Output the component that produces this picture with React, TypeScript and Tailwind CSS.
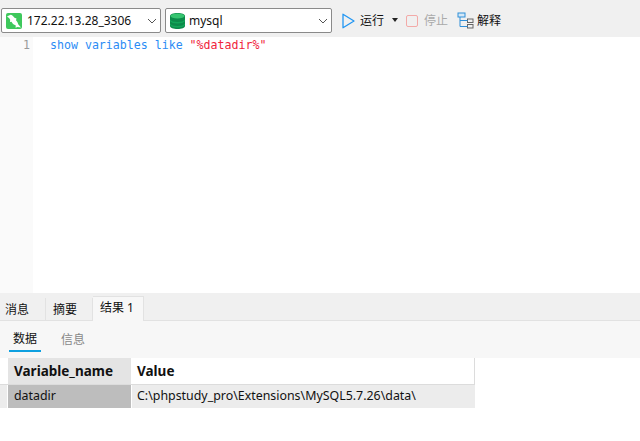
const uiFont = "font-['Noto_Sans','Noto_Sans_CJK_SC',sans-serif]"

function Chevron() {
  return (
    <svg width="10" height="6" viewBox="0 0 10 6" fill="none" stroke="#555" strokeWidth="1" aria-hidden="true">
      <path d="M1 1l4 4 4-4" />
    </svg>
  )
}

function DolphinIcon() {
  return (
    <svg width="16" height="16" viewBox="0 0 16 16" aria-hidden="true">
      <rect width="16" height="16" rx="2" fill="#3ec85c" />
      <path d="M1 3.500 3 2.500 4.500 1.800C6 2 7.500 3.200 8.500 4.800L10.500 5.500 10 7.200C11.200 8.500 12 10 12.200 11.300L15 14.500 11.500 14 9.500 14.800 9.800 12.500 7 11 5.500 8.800 4 9 4.200 6.800 3 5z" fill="#fff" />
    </svg>
  )
}

function DatabaseIcon() {
  return (
    <svg width="15" height="16" viewBox="0 0 15 16" aria-hidden="true">
      <path d="M0 3c0-1.700 3.400-3 7.500-3S15 1.300 15 3v10c0 1.700-3.400 3-7.500 3S0 14.700 0 13z" fill="#0c8a4a" />
      <ellipse cx="7.500" cy="3" rx="7" ry="2.600" fill="#35c46f" />
      <path d="M0 6.500c1 1.700 4 2.500 7.500 2.500s6.500-.8 7.500-2.500v1.500C14 9.700 11 10.500 7.500 10.500S1 9.700 0 8z" fill="#12a659" />
      <path d="M0 10.500c1 1.700 4 2.500 7.500 2.500s6.500-.8 7.500-2.500V12c-1 1.700-4 2.500-7.500 2.500S1 13.700 0 12z" fill="#12a659" />
    </svg>
  )
}

function ExplainIcon() {
  return (
    <svg width="17" height="17" viewBox="0 0 17 17" fill="none" aria-hidden="true">
      <rect x="1" y="1" width="7" height="4" fill="#d5e8f7" stroke="#2f8fd8" />
      <rect x="10.500" y="7" width="5.500" height="3.500" stroke="#666" />
      <rect x="10.500" y="12.500" width="5.500" height="3.500" stroke="#666" />
      <path d="M3 5v9.500h7.500M3 8.500h7.500" stroke="#2f8fd8" />
    </svg>
  )
}

export default function App() {
  return (
    <div className={`flex h-[441px] w-[640px] flex-col overflow-hidden bg-white text-[#111] ${uiFont}`}>
      {/* Toolbar */}
      <div className="flex h-[37px] items-start gap-[4px] bg-[#f0f0f0] pl-[1px] pt-[8px]">
        <div className="flex h-[25px] w-[160px] items-center rounded-[2px] border border-[#8a8a8a] bg-white pl-[4px] pr-[3px]">
          <DolphinIcon />
          <span className="ml-[5px] flex-1 text-[12px] leading-none">172.22.13.28_3306</span>
          <Chevron />
        </div>
        <div className="flex h-[25px] w-[167px] items-center rounded-[2px] border border-[#8a8a8a] bg-white pl-[4px] pr-[3px]">
          <DatabaseIcon />
          <span className="ml-[4px] flex-1 text-[12px] leading-none">mysql</span>
          <Chevron />
        </div>
        <div className="ml-[6px] flex h-[25px] items-center">
          <svg width="13" height="16" viewBox="0 0 13 16" fill="none" stroke="#2196f3" strokeWidth="1.300" aria-hidden="true">
            <path d="M1 1.200v13.600L12 8z" strokeLinejoin="round" />
          </svg>
          <span className="ml-[5px] text-[12px] leading-none">运行</span>
          <span className="ml-[8px] mt-[-1px] h-0 w-0 border-x-[3px] border-t-[4px] border-x-transparent border-t-[#222]" />
          <span className="ml-[8px] h-[12px] w-[12px] rounded-[2px] border border-[#f3aaa8]" />
          <span className="ml-[6px] text-[12px] leading-none text-[#aaa]">停止</span>
          <span className="ml-[9px]"><ExplainIcon /></span>
          <span className="ml-[3px] text-[12px] leading-none">解释</span>
        </div>
      </div>

      {/* Editor */}
      <div className="flex h-[256px]">
        <div className="w-[33px] bg-[#fafafa] pr-[3px] text-right font-['DejaVu_Sans_Mono',monospace] text-[11.600px] leading-[16px] text-[#999]">
          1
        </div>
        <div className="pl-[17px] font-['DejaVu_Sans_Mono',monospace] text-[11.600px] leading-[16px] whitespace-pre">
          <span className="text-[#2b8cf5]">show variables like </span>
          <span className="text-[#f0243c]">"%datadir%"</span>
        </div>
      </div>

      {/* Tabs */}
      <div className="flex h-[28px] items-end bg-[#f0f0f0] text-[12px] leading-none">
        <div className="flex h-[23px] w-[46px] items-center border-r border-b border-[#e2e2e2] pl-[5px] pt-[2px]">消息</div>
        <div className="flex h-[23px] w-[47px] items-center border-r border-b border-[#e2e2e2] pl-[7px] pt-[2px]">摘要</div>
        <div className="flex h-[25px] w-[51px] items-center border-r border-t border-[#e2e2e2] bg-[#f7f7f7] pb-[2px] pl-[7px]">结果 1</div>
        <div className="h-px flex-1 self-end bg-[#e2e2e2]" />
      </div>

      {/* Sub tabs */}
      <div className="flex h-[37px] items-start bg-[#f7f7f7] pl-[9px] text-[12px] leading-none">
        <div className="flex h-[31px] w-[32px] items-center justify-center border-b-2 border-[#0ea0e0] pt-[7px]">数据</div>
        <div className="ml-[20px] flex h-[31px] items-center pt-[7px] text-[#888]">信息</div>
      </div>

      {/* Result grid */}
      <div className="flex-1 bg-white text-[12.400px]">
        <div className="flex h-[27px] w-[475px] border-b border-[#dcdcdc]">
          <div className="w-[8px]" />
          <div className="flex w-[124px] items-center border-r border-white bg-[#e4e4e4] pl-[6px] text-[13.500px] font-bold">Variable_name</div>
          <div className="flex flex-1 items-center border-r border-[#dcdcdc] pl-[5px] text-[13.500px] font-bold">Value</div>
        </div>
        <div className="flex h-[23px] w-[475px] bg-[#ececec]">
          <div className="w-[8px] border-r border-white" />
          <div className="flex w-[124px] items-center border-r border-white bg-[#bdbdbd] pl-[6px]">datadir</div>
          <div className="flex flex-1 items-center pl-[5px] whitespace-nowrap">C:\phpstudy_pro\Extensions\MySQL5.7.26\data\</div>
        </div>
      </div>
    </div>
  )
}
